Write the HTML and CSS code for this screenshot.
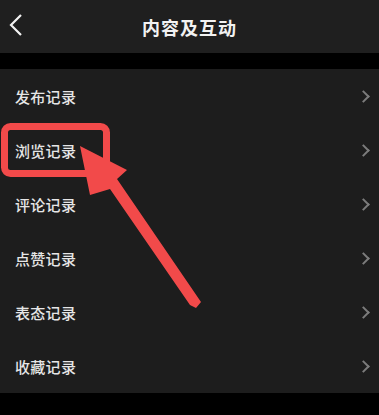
FILE: index.html
```html
<!DOCTYPE html>
<html>
<head>
	<title>内容及互动</title>
	<meta charset="utf-8"/>
	<link rel="stylesheet" href="styles.css">
</head>
<body>
	<div class="page">
		<div class="header">
			<svg class="back" width="14" height="22" viewBox="0 0 14 22">
				<polyline points="12,1 2,11 12,21" fill="none" stroke="#f2f2f2" stroke-width="2.2"/>
			</svg>
			<h1 class="title">内容及互动</h1>
		</div>
		<div class="list">
			<div class="row"><span class="label">发布记录</span><span class="arrow"></span></div>
			<div class="row"><span class="label">浏览记录</span><span class="arrow"></span></div>
			<div class="row"><span class="label">评论记录</span><span class="arrow"></span></div>
			<div class="row"><span class="label">点赞记录</span><span class="arrow"></span></div>
			<div class="row"><span class="label">表态记录</span><span class="arrow"></span></div>
			<div class="row"><span class="label">收藏记录</span><span class="arrow"></span></div>
		</div>

		<!-- annotation drawn over the list -->
		<svg class="mark" width="379" height="415" viewBox="0 0 379 415">
			<rect x="4.5" y="126.5" width="102" height="47" rx="6" fill="none" stroke="#f24a4a" stroke-width="7"/>
			<polygon points="80,146 127,170 117,179 201,302 196,308 190,305 110,189 90,195" fill="#f24a4a"/>
		</svg>
	</div>
</body>
</html>
```

FILE: styles.css
```css
html,body{
	margin: 0;
	padding: 0;
	background: #000;
}

*{
	font-family: "Noto Sans CJK SC", "Noto Sans", sans-serif;
}

.page{
	position: relative;
	width: 379px;
	height: 415px;
	overflow: hidden;
}

.header{
	height: 53px;
	background: #1f1f1f;
	display: flex;
	align-items: center;
	justify-content: center;
	position: relative;
}

.back{
	position: absolute;
	left: 9px;
	top: 14px;
}

.title{
	margin: 0;
	font-size: 18px;
	font-weight: 700;
	color: #f2f2f2;
	letter-spacing: 1px;
}

.list{
	margin-top: 16px;
	background: #1d1d1d;
}

.row{
	height: 54px;
	display: flex;
	align-items: center;
	justify-content: space-between;
	padding: 0 11px 0 15px;
}

.label{
	font-size: 15px;
	font-weight: 500;
	color: #e6e6e6;
	letter-spacing: 0.3px;
}

.arrow{
	width: 7px;
	height: 7px;
	border-top: 2px solid #7c7c7c;
	border-right: 2px solid #7c7c7c;
	transform: rotate(45deg);
}

.mark{
	position: absolute;
	left: 0;
	top: 0;
}
```
